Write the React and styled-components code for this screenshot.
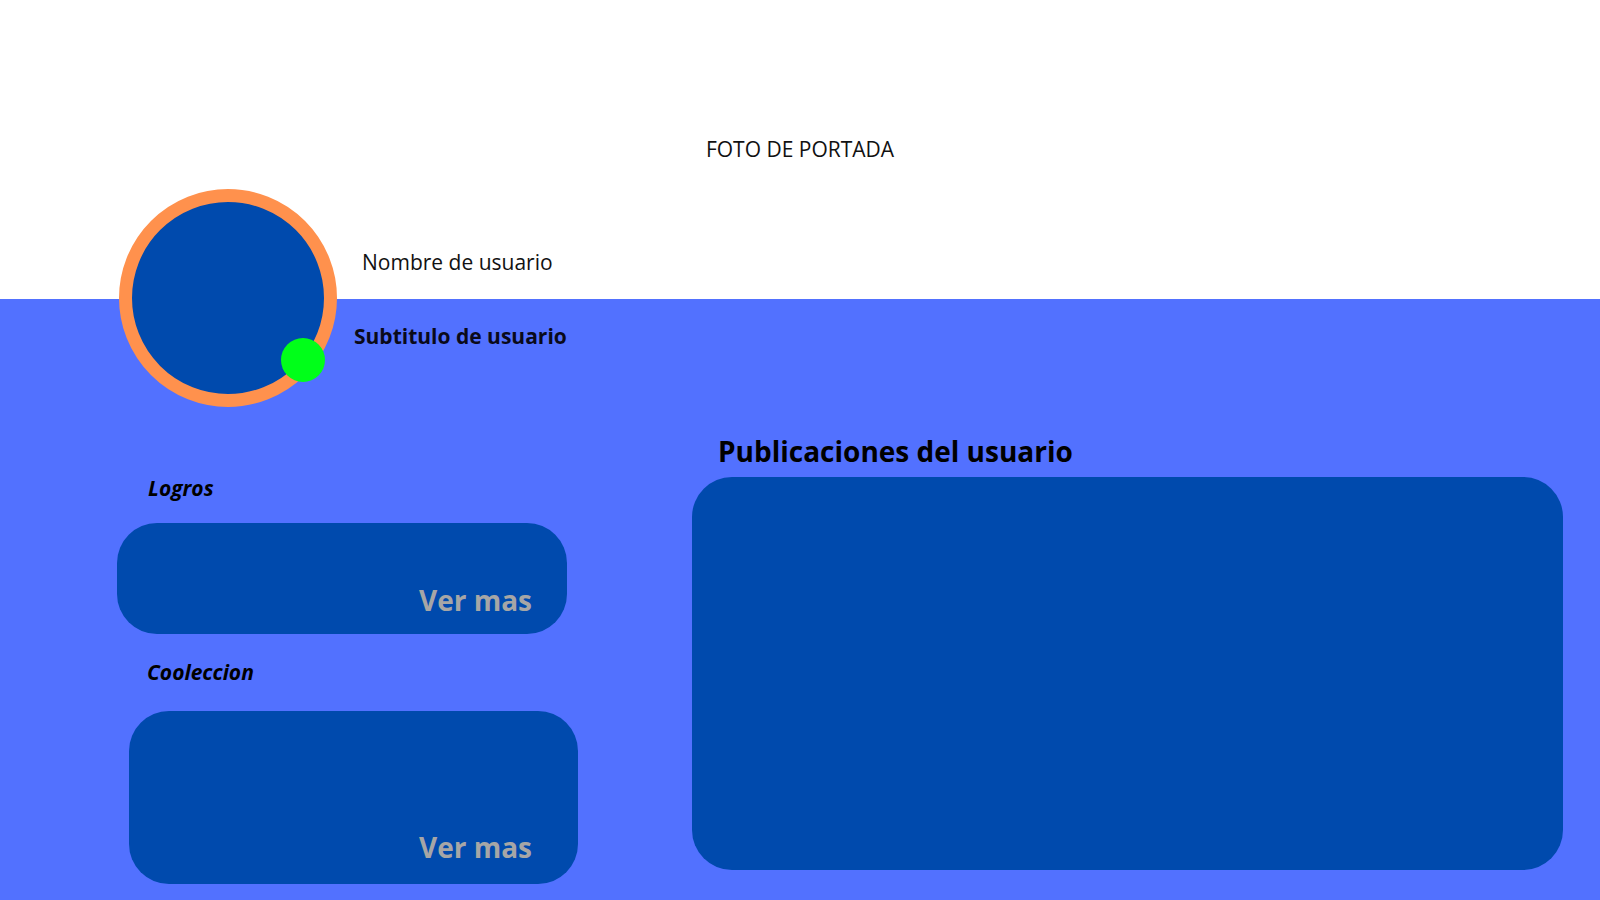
import React from "react";
import styled, { createGlobalStyle } from "styled-components";

const GlobalStyle = createGlobalStyle`
    * { box-sizing: border-box; }
    body {
        margin: 0;
        font-family: "Open Sans", "Noto Sans", sans-serif;
        background: #ffffff;
        color: #000000;
    }
`;

export default function App() {
    return (
        <>
            <GlobalStyle />
            <Page>
                <Cover>
                    <CoverTitle>FOTO DE PORTADA</CoverTitle>
                </Cover>
                <Body>
                    <ProfileRow>
                        <Avatar>
                            <OnlineDot />
                        </Avatar>
                        <ProfileText>
                            <UserName>Nombre de usuario</UserName>
                            <UserSubtitle>Subtitulo de usuario</UserSubtitle>
                        </ProfileText>
                    </ProfileRow>
                    <Content>
                        <SideColumn>
                            <SectionLabel $indent={31}>Logros</SectionLabel>
                            <Card $gap={21} $width={450} $height={111} $padRight={35} $padBottom={15}>
                                <SeeMore>Ver mas</SeeMore>
                            </Card>
                            <SectionLabel $indent={30} $gap={24}>Cooleccion</SectionLabel>
                            <Card $gap={25} $indent={12} $width={449} $height={173} $padRight={46} $padBottom={18}>
                                <SeeMore>Ver mas</SeeMore>
                            </Card>
                        </SideColumn>
                        <MainColumn>
                            <PostsTitle>Publicaciones del usuario</PostsTitle>
                            <PostsCard />
                        </MainColumn>
                    </Content>
                </Body>
            </Page>
        </>
    )
}

//====================================
//        THIS COMPONENT STYLES
//====================================
const Page = styled('div')`
    width: 1600px;
    min-height: 900px;
    display: flex;
    flex-direction: column;
    overflow: hidden;
`;
const Cover = styled('header')`
    height: 299px;
    background: #ffffff;
    display: flex;
    justify-content: center;
    padding-top: 135px;
`;
const CoverTitle = styled('h1')`
    margin: 0;
    font-size: 21px;
    font-weight: 400;
    line-height: normal;
    color: #111111;
`;
const Body = styled('main')`
    flex: 1;
    background: #5271ff;
    padding-bottom: 15px;
`;
const ProfileRow = styled('section')`
    display: flex;
    align-items: flex-start;
    margin-top: -110px;
    padding-left: 119px;
`;
const Avatar = styled('div')`
    position: relative;
    width: 218px;
    height: 218px;
    flex-shrink: 0;
    border-radius: 50%;
    border: 13px solid #ff914d;
    background: #004aad;
`;
const OnlineDot = styled('span')`
    position: absolute;
    left: 149px;
    top: 136px;
    width: 44px;
    height: 44px;
    border-radius: 50%;
    background: #00ff19;
`;
const ProfileText = styled('div')`
    display: flex;
    flex-direction: column;
    padding-top: 59px;
`;
const UserName = styled('div')`
    margin-left: 25px;
    font-size: 21px;
    font-weight: 400;
    line-height: normal;
    color: #111111;
`;
const UserSubtitle = styled('div')`
    margin-left: 17px;
    margin-top: 46px;
    font-size: 21px;
    font-weight: 700;
    line-height: normal;
    color: #0a0a1a;
`;
const Content = styled('section')`
    display: flex;
    align-items: flex-start;
    gap: 114px;
    padding-left: 117px;
    padding-top: 24px;
`;
const SideColumn = styled('div')`
    width: 461px;
    display: flex;
    flex-direction: column;
    align-items: flex-start;
    padding-top: 43px;
`;
const SectionLabel = styled('h3')`
    margin: ${(props)=> props.$gap || 0}px 0 0 ${(props)=> props.$indent}px;
    font-size: 21px;
    font-weight: 700;
    font-style: italic;
    line-height: normal;
    color: #000000;
`;
const Card = styled('div')`
    width: ${(props)=> props.$width}px;
    height: ${(props)=> props.$height}px;
    margin-top: ${(props)=> props.$gap}px;
    margin-left: ${(props)=> props.$indent || 0}px;
    border-radius: 40px;
    background: #004aad;
    display: flex;
    align-items: flex-end;
    justify-content: flex-end;
    padding: 0 ${(props)=> props.$padRight}px ${(props)=> props.$padBottom}px 0;
`;
const SeeMore = styled('span')`
    font-size: 28px;
    font-weight: 700;
    line-height: normal;
    color: #a6a6a6;
`;
const MainColumn = styled('div')`
    width: 871px;
    display: flex;
    flex-direction: column;
`;
const PostsTitle = styled('h2')`
    margin: 1px 0 0 26px;
    font-size: 28px;
    font-weight: 700;
    line-height: normal;
    color: #000000;
`;
const PostsCard = styled('div')`
    margin-top: 7px;
    height: 393px;
    border-radius: 40px;
    background: #004aad;
`;
